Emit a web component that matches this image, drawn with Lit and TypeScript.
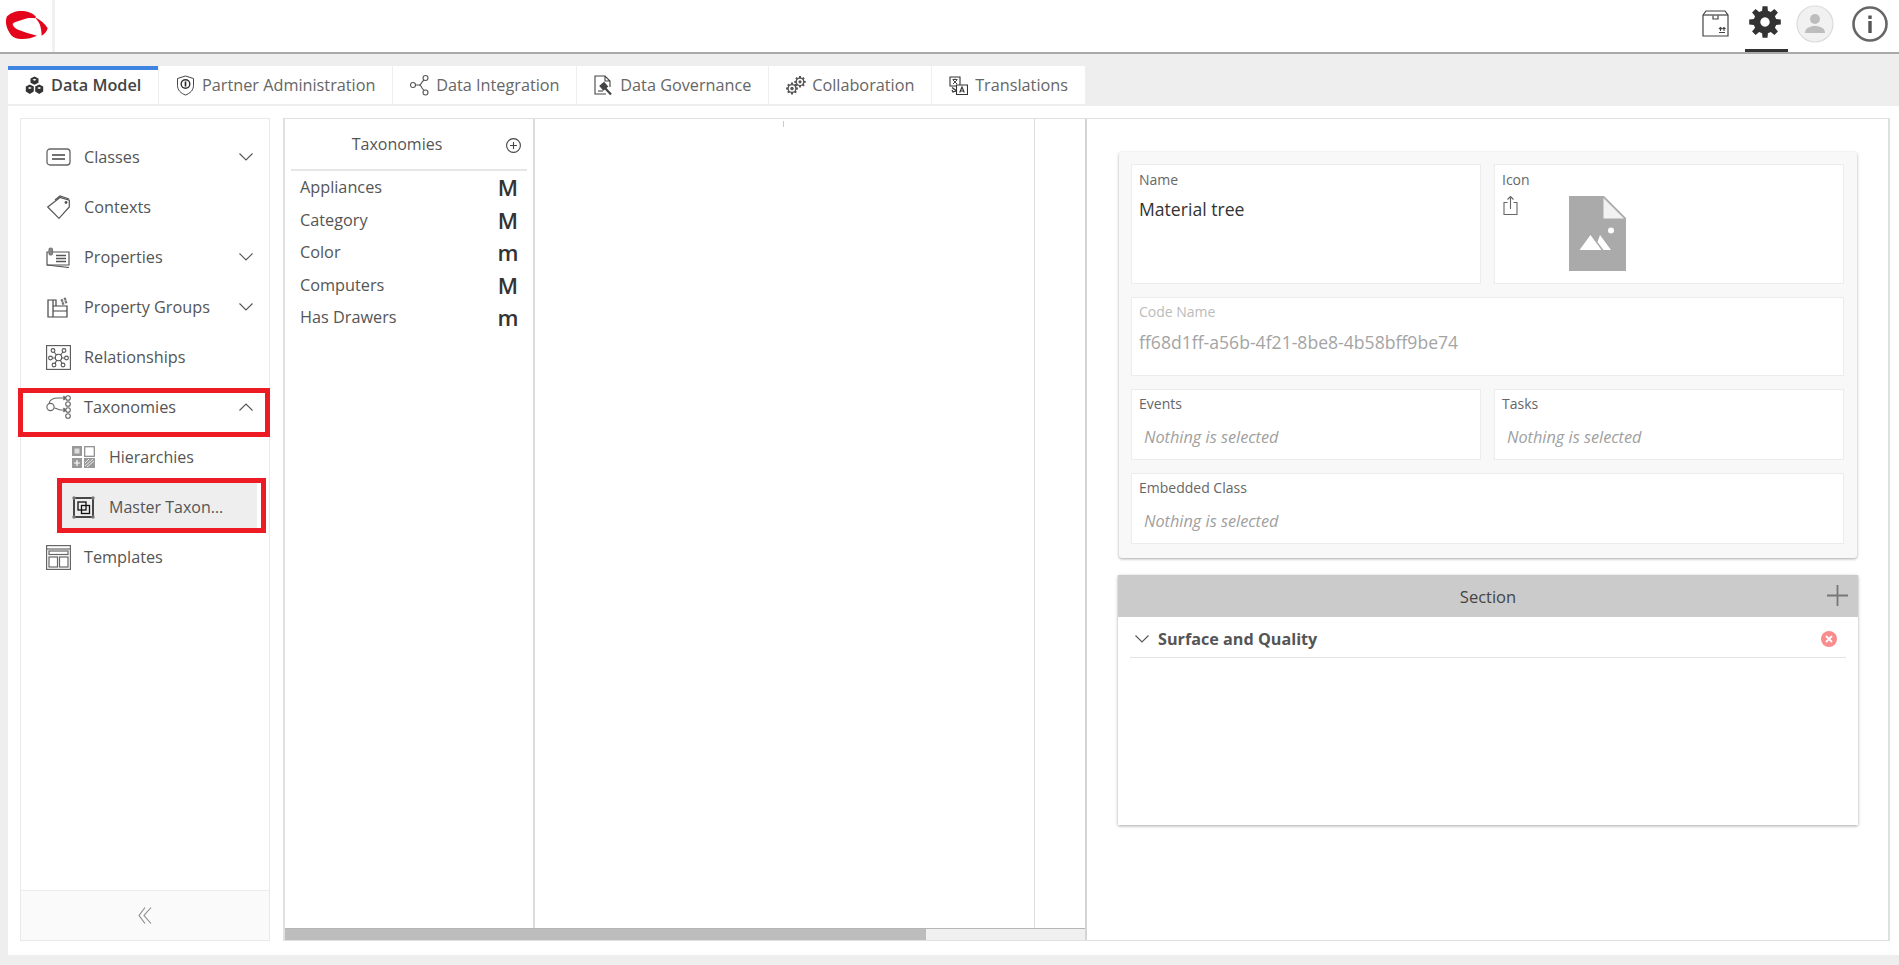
import { LitElement, html, css } from "lit";
import { customElement } from "lit/decorators.js";

function gearPath(cx: number, cy: number, outer: number, root: number, teeth: number) {
  const pts: string[] = [];
  const step = (Math.PI * 2) / teeth;
  for (let i = 0; i < teeth; i++) {
    const a = i * step - Math.PI / 2;
    const w = step * 0.2;
    const w2 = step * 0.3;
    const p = (r: number, t: number) => `${(cx + r * Math.cos(t)).toFixed(2)} ${(cy + r * Math.sin(t)).toFixed(2)}`;
    pts.push(p(root, a - w2 - 0.02), p(outer, a - w), p(outer, a + w), p(root, a + w2 + 0.02));
  }
  return "M" + pts.join("L") + "Z";
}

const ICONS: Record<string, unknown> = {
  model: html`<svg width="19" height="19" viewBox="0 0 19 19" fill="#333"><path d="M9.5 .5l4 2v4.2l-4 2-4-2V2.500z"/><path d="M4.800 8.500l4 2v5l-4 2.500-4-2.500v-5z"/><path d="M14.200 8.500l4 2v5l-4 2.500-4-2.500v-5z"/><path d="M9.500 2.800l2 1-2 1-2-1zM4.800 11l2 1-2 1-2-1zM14.200 11l2 1-2 1-2-1z" fill="#fff"/></svg>`,
  shield: html`<svg width="19" height="21" viewBox="0 0 19 21" fill="none" stroke="#444"><path d="M9.500 1l8 2.500v7c0 4.500-3.500 8-8 9.500-4.500-1.500-8-5-8-9.500v-7z"/><circle cx="9.500" cy="9" r="5" fill="#333" stroke="none"/><circle cx="9.500" cy="9" r="3.600" fill="#fff" stroke="none"/><path d="M9.500 6.500v5" stroke="#222" stroke-width="1.600"/></svg>`,
  nodes: html`<svg width="21" height="22" viewBox="0 0 21 22" fill="none" stroke="#555" stroke-width="1.100"><circle cx="3" cy="11" r="2.500"/><circle cx="15.500" cy="4" r="2.500"/><circle cx="15.500" cy="18.500" r="2.500"/><path d="M5.500 11h3.500c2 0 2-1 3-3l2-2M9 11c2 0 2 1 3 3l2 2.500"/></svg>`,
  gavel: html`<svg width="19" height="21" viewBox="0 0 19 21" fill="none" stroke="#444" stroke-width="1.100"><path d="M12 19H1V1h10l5 5v6M11 1v5h5"/><path d="M6 11l4-3.500 3.500 4-4 3.500z" fill="#444"/><path d="M11 13l6 6.500" stroke-width="2.200"/><path d="M4 16h5" /></svg>`,
  gears: html`<svg width="20" height="19" viewBox="0 0 20 19"><path d="${gearPath(6, 12.500, 6, 4.500, 8)}" fill="#555"/><circle cx="6" cy="12.500" r="3.200" fill="#fff"/><circle cx="6" cy="12.500" r="1.700" fill="#555"/><path d="${gearPath(14, 5.800, 5.800, 4.400, 8)}" fill="#555"/><circle cx="14" cy="5.800" r="3.100" fill="#fff"/><circle cx="14" cy="5.800" r="1.600" fill="#555"/></svg>`,
  translate: html`<svg width="19" height="19" viewBox="0 0 19 19" fill="none" stroke="#333" stroke-width="1.100"><path d="M1 1h10v9H8l-4 0H1z"/><path d="M3.500 3.500h5M6 2.500v1M4 4l4 4M8 4L4 8" stroke-width=".9"/><path d="M7.500 9h11v9.500h-11z" fill="#fff"/><path d="M10.700 16.500l2.300-5.500 2.300 5.500M11.500 15h3" /><path d="M3 11.500l4 3M3 14l1 2 3-1" stroke-width="1.300"/></svg>`,
  box: html`<svg width="27" height="27" viewBox="0 0 27 27" fill="none" stroke="#444" stroke-width="1.200"><path d="M1 5l3-4h19l3 4v21H1z"/><path d="M1 5h25"/><path d="M11 5.500v3.500h5V5.500" /><path d="M17 22.500h6M18.500 21v-3.500m-1.500 1.500 1.500-1.500 1.500 1.500M22 21v-3.500m-1.500 1.500 1.500-1.500 1.500 1.500" stroke-width="1.100"/></svg>`,
  classes: html`<svg width="25" height="18" viewBox="0 0 25 18" fill="none" stroke="#666" stroke-width="1.300"><rect x="1" y="1" width="23" height="16" rx="3"/><path d="M6 7h13M6 11h13" stroke="#444"/></svg>`,
  contexts: html`<svg width="25" height="24" viewBox="0 0 25 24" fill="none" stroke="#555" stroke-width="1.200"><path d="M1.700 12L14 2.500l9.300 2.800V12L13 23.300z"/><path d="M9 5L14 1l9 3"/><circle cx="20" cy="7.500" r="1.400" fill="#555" stroke="none"/></svg>`,
  props: html`<svg width="24" height="21" viewBox="0 0 24 21" fill="none" stroke="#555" stroke-width="1.200"><path d="M1 5h22v13H1z"/><path d="M1 18l22 2.500"/><path d="M10 8.500h10M10 11.500h10M10 14.500h10" stroke-width="1.400"/><rect x="3" y="1" width="3.500" height="7" rx="1.700" fill="#888" stroke="#777"/></svg>`,
  groups: html`<svg width="24" height="22" viewBox="0 0 24 22" fill="none" stroke="#444" stroke-width="1.200"><path d="M2 4h8v6h11v11H2zM7 4v17M7 10h14M7 15h14"/><path d="M16 8l2-1M19 6.500l2-1M15 5l2-1M18 3.500l2-1" stroke="#777" stroke-width="2.600"/></svg>`,
  rel: html`<svg width="25" height="25" viewBox="0 0 25 25" fill="none" stroke="#555" stroke-width="1.100"><rect x=".6" y=".6" width="23.800" height="23.800"/><circle cx="12.500" cy="12.500" r="3.200"/><circle cx="7" cy="5.500" r="1.900"/><circle cx="18" cy="5.500" r="1.900"/><circle cx="4.500" cy="13" r="1.900"/><circle cx="20.500" cy="13" r="1.900"/><circle cx="8" cy="20" r="1.900"/><circle cx="17" cy="20" r="1.900"/><path d="M8 7l2.500 3M17 7l-2.500 3M6.500 13h3M18.500 13h-3M9 18.500l1.700-3.300M16 18.500l-1.700-3.300"/></svg>`,
  tax: html`<svg width="25" height="26" viewBox="0 0 25 26" fill="none" stroke="#666" stroke-width="1.100"><circle cx="4.500" cy="13" r="3.600"/><circle cx="22" cy="4" r="2.300"/><circle cx="22" cy="10" r="2.300"/><circle cx="22" cy="16" r="2.300"/><circle cx="22" cy="22" r="2.300"/><path d="M3 9.500C4 5 8 4 12 4h7.500M8 14c3 0 4 2 7 2h4.500"/><path d="M17.500 2l2 2-2 2M17.500 14l2 2-2 2" fill="#666"/></svg>`,
  hier: html`<svg width="23" height="22" viewBox="0 0 23 22"><rect x="0" y="0" width="10" height="10" fill="#999"/><rect x="2.500" y="2.500" width="5" height="5" fill="#ddd"/><rect x="12.700" y=".7" width="9.600" height="9.600" fill="none" stroke="#888" stroke-width="1.200"/><rect x="0" y="12" width="10" height="10" fill="#999"/><path d="M5 14v6M2 17h6" stroke="#fff" stroke-width="1.200"/><rect x="12" y="12" width="11" height="10" fill="#999"/><path d="M13 20l8-7M15 21l7-6M13 17l4-4" stroke="#fff" stroke-width=".8"/></svg>`,
  master: html`<svg width="23" height="23" viewBox="0 0 23 23" fill="none" stroke="#111" stroke-width="1.500"><rect x="2" y="2" width="19" height="19"/><rect x="6" y="6" width="8" height="8" stroke-width="1.300"/><rect x="9.500" y="9.500" width="8" height="8" stroke-width="1.300"/><circle cx="2" cy="2" r="1.700" fill="#777" stroke="none"/><circle cx="21" cy="2" r="1.700" fill="#777" stroke="none"/><circle cx="2" cy="21" r="1.700" fill="#777" stroke="none"/><circle cx="21" cy="21" r="1.700" fill="#777" stroke="none"/></svg>`,
  tpl: html`<svg width="25" height="25" viewBox="0 0 25 25" fill="none" stroke="#666" stroke-width="1.200"><rect x=".6" y=".6" width="23.800" height="23.800"/><path d="M.6 4h23.800" /><rect x="3" y="6" width="19" height="3.500"/><rect x="3" y="12" width="8.500" height="10"/><rect x="13.500" y="12" width="8.500" height="10"/></svg>`,
};

const TABS = [
  ["Data Model", "model"],
  ["Partner Administration", "shield"],
  ["Data Integration", "nodes"],
  ["Data Governance", "gavel"],
  ["Collaboration", "gears"],
  ["Translations", "translate"],
];

const TAXA = [
  ["Appliances", "M"],
  ["Category", "M"],
  ["Color", "m"],
  ["Computers", "M"],
  ["Has Drawers", "m"],
];

const chevDown = html`<svg class="chev" width="14" height="8" viewBox="0 0 14 8" fill="none" stroke="#555" stroke-width="1.100"><path d="M.5 .5L7 7l6.500-6.500"/></svg>`;
const chevUp = html`<svg class="chev" width="14" height="8" viewBox="0 0 14 8" fill="none" stroke="#555" stroke-width="1.100"><path d="M.5 7.500L7 1l6.500 6.500"/></svg>`;

@customElement("app-root")
export class AppRoot extends LitElement {
  static styles = css`
    :host {
      display: flex;
      flex-direction: column;
      height: 100vh;
      background: #eeeeee;
      font-family: "Open Sans", sans-serif;
      color: #555;
      font-size: 16.250px;
      overflow: hidden;
    }
    * { box-sizing: border-box; }
    svg { display: block; flex: none; }

    .top {
      height: 54px;
      flex: none;
      background: #fff;
      border-bottom: 2px solid #a9a9a9;
      display: flex;
      align-items: stretch;
    }
    .logo { width: 52px; display: flex; align-items: center; justify-content: flex-start; }
    .logo-sep { width: 3px; background: #f1f1f1; }
    .top-right { margin-left: auto; display: flex; align-items: flex-start; padding-right: 11px; }
    .tool { display: flex; align-items: flex-start; justify-content: center; }
    .tool.box { width: 27px; margin-right: 16px; padding-top: 10px; }
    .tool.gear { width: 43px; height: 52px; border-bottom: 3px solid #333; padding: 6px 4px 0 0; margin-right: 8px; }
    .tool.user { width: 38px; margin-right: 18px; padding-top: 5px; }
    .tool.info { width: 36px; padding-top: 6px; }

    .tabs { display: flex; padding: 12px 0 2px 8px; flex: none; gap: 1px; }
    .tab {
      height: 38px;
      background: #fff;
      display: flex;
      align-items: center;
      padding: 0 16.700px 0 16.5px;
      color: #666;
      font-size: 16.250px;
      white-space: nowrap;
    }
    .tab.on { border-top: 4px solid #3d85e0; color: #444; font-weight: 600; padding-bottom: 4px; }
    .tab-icon { width: 26.500px; display: flex; align-items: center; }

    .main {
      flex: 1;
      min-height: 0;
      margin: 0 0 10px 8px;
      background: #fff;
      padding: 12px 9px 14px 12px;
      display: flex;
      gap: 13px;
    }

    .side {
      width: 250px;
      flex: none;
      border: 1px solid #e9e9e9;
      display: flex;
      flex-direction: column;
      padding-top: 13px;
      color: #555;
    }
    .row {
      position: relative;
      height: 50px;
      flex: none;
      display: flex;
      align-items: center;
      padding: 0 16px 0 25px;
    }
    .slot { width: 38px; display: flex; align-items: center; }
    .chev { margin-left: auto; }
    .row.mark::after {
      content: "";
      position: absolute;
      top: 6px; bottom: -5px; left: -3px; right: -1px;
      border: 5px solid #ed1c24;
      pointer-events: none;
    }
    .row.sub { margin-left: 41px; width: 195px; padding: 0 0 0 10px; font-size: 16px; }
    .row.sub .slot { width: 37px; }
    .row.sub.on {
      height: 45px;
      margin-top: 1px;
      margin-bottom: 4px;
      padding-top: 3px;
      background: #eeeeee;
    }
    .row.sub.on::after {
      content: "";
      position: absolute;
      top: -5px; bottom: -5px; left: -5px; right: -9px;
      border: 5px solid #ed1c24;
      pointer-events: none;
    }
    .collapse {
      margin-top: auto;
      height: 50px;
      flex: none;
      border-top: 1px solid #ececec;
      background: #fafafa;
      display: flex;
      align-items: center;
      justify-content: center;
    }

    .work {
      flex: 1;
      display: flex;
      border: 1px solid #e0e0e0;
      border-width: 1px 2px 1px 2px;
      min-width: 0;
    }
    .left {
      width: 802px;
      flex: none;
      display: flex;
      flex-direction: column;
      border-right: 2px solid #d4d4d4;
    }
    .cols { flex: 1; display: flex; min-height: 0; }
    .col-tax { width: 250px; flex: none; border-right: 2px solid #dcdcdc; padding: 0 6px 0 6px; }
    .col-empty { width: 500px; flex: none; border-right: 1px solid #dcdcdc; }
    .tick { width: 1px; height: 6px; background: #ccc; margin: 2px 0 0 248px; }
    .tax-head {
      height: 52px;
      border-bottom: 2px solid #e6e6e6;
      display: flex;
      align-items: center;
      padding-bottom: 2px;
    }
    .tax-title { flex: 1; text-align: center; padding-right: 3px; padding-top: 1px; color: #555; font-size: 16px; }
    .tax-add { margin-right: 6px; margin-top: 4px; }
    .tax-list { padding: 0 10px 0 9px; }
    .tax-row { height: 32.500px; display: flex; align-items: center; justify-content: space-between; color: #555; }
    .tax-badge { font-weight: 600; font-size: 22px; color: #333; line-height: 1; width: 18px; display: flex; justify-content: center; }
    .scroll { height: 12px; flex: none; background: #f0f0f0; border-top: 1px solid #b5b5b5; }
    .thumb { width: 641px; height: 100%; background: #bdbdbd; }

    .right { flex: 1; padding: 33px 30px 0 31px; min-width: 0; }
    .card {
      background: #f8f8f8;
      border-radius: 3px;
      box-shadow: 0 1px 3px rgba(0,0,0,.35);
      padding: 12px 13px 14px 12px;
      margin: 0 1px;
      display: grid;
      grid-template-columns: 1fr 1fr;
      column-gap: 13px;
      row-gap: 13px;
    }
    .fbox { background: #fff; border: 1px solid #ececec; padding: 5px 6px 0 7px; }
    .fbox.wide { grid-column: 1 / 3; }
    .h1 { height: 120px; padding-top: 6px; }
    .h2 { height: 79px; }
    .h3 { height: 71px; }
    .lab { font-size: 14px; line-height: 18px; color: #666; }
    .lab.dim { color: #bbb; }
    .val { font-size: 17.600px; line-height: 24px; color: #333; margin-top: 8px; }
    .val.dim { color: #a4a4a4; margin-top: 8.500px; }
    .none { font-size: 16.300px; line-height: 20px; font-style: italic; color: #a0a0a0; margin: 14px 0 0 5px; }
    .icon-row { display: flex; margin-top: 7px; }
    .share { margin-left: 1px; }
    .file { margin-left: 51px; }

    .section {
      margin-top: 17px;
      height: 250px;
      background: #fff;
      box-shadow: 0 1px 3px rgba(0,0,0,.35);
    }
    .sec-head {
      height: 42px;
      background: #cbcbcb;
      display: flex;
      align-items: center;
      justify-content: center;
      position: relative;
      color: #444;
      font-size: 16.500px;
    }
    .sec-add { position: absolute; right: 10px; top: 10px; }
    .sec-row {
      margin: 0 12px;
      height: 41px;
      border-bottom: 1px solid #e2e2e2;
      display: flex;
      align-items: center;
      font-weight: 700;
      font-size: 16.200px;
      color: #555;
      padding: 3px 0 0 5px;
    }
    .sec-row .name { margin-left: 9px; }
    .del {
      margin-left: auto;
      margin-right: 9px;
      width: 16px; height: 16px;
      border-radius: 50%;
      background: #f98d8d;
      display: flex;
      align-items: center;
      justify-content: center;
    }
  `;

  render() {
    return html`
      <div class="top">
        <div class="logo">
          <svg width="52" height="52" viewBox="0 0 52 52"><path fill="#e3051b" d="M6.700 16.700C10 13 16 11 21 11c6 0 12 2 15 5.700l-1 1.600c-4-.8-9-.4-13.300 1.700-4 1.300-9.300 2.800-9 4.300.5 2 2 3.500 4 4.700 5 2.500 14 5 20.300 6.700-4.500 2.200-10.500 3.600-16 3.300-4-.2-7.500-1.300-9.300-3.300C8 31 5.500 26 6 20z"/><path fill="#e3051b" d="M35 17.300c5.500 2.500 10 6.500 12.700 11-1 3-3 6-6 7.400-.2-4-.7-7.500-1.700-10.700-1-2.700-3-5-5-7.700z"/></svg>
        </div>
        <div class="logo-sep"></div>
        <div class="top-right">
          <div class="tool box">${ICONS.box}</div>
          <div class="tool gear">
            <svg width="32" height="32" viewBox="0 0 32 32"><path fill="#333" fill-rule="evenodd" d="${gearPath(16, 16, 16, 11.500, 8)} M16 11.300a4.700 4.700 0 1 0 .01 0z"/></svg>
          </div>
          <div class="tool user">
            <svg width="38" height="38" viewBox="0 0 38 38"><circle cx="19" cy="19" r="18" fill="#f1f1f1" stroke="#dcdcdc" stroke-width="1.200"/><circle cx="19" cy="14" r="5" fill="#bdbdbd"/><path d="M9 28c0-5 5-7 10-7s10 2 10 7z" fill="#bdbdbd"/></svg>
          </div>
          <div class="tool info">
            <svg width="36" height="36" viewBox="0 0 36 36" fill="none"><circle cx="18" cy="18" r="16.500" stroke="#666" stroke-width="2.600"/><rect x="16.300" y="15" width="3.400" height="12" fill="#555"/><rect x="16.300" y="9.500" width="3.400" height="3.400" fill="#555"/></svg>
          </div>
        </div>
      </div>

      <div class="tabs">
        ${TABS.map(
          ([label, icon], i) => html`<div class="tab ${i === 0 ? "on" : ""}"><span class="tab-icon">${ICONS[icon]}</span>${label}</div>`
        )}
      </div>

      <div class="main">
        <nav class="side">
          <div class="row"><span class="slot">${ICONS.classes}</span>Classes${chevDown}</div>
          <div class="row"><span class="slot">${ICONS.contexts}</span>Contexts</div>
          <div class="row"><span class="slot">${ICONS.props}</span>Properties${chevDown}</div>
          <div class="row"><span class="slot">${ICONS.groups}</span>Property Groups${chevDown}</div>
          <div class="row"><span class="slot">${ICONS.rel}</span>Relationships</div>
          <div class="row mark"><span class="slot">${ICONS.tax}</span>Taxonomies${chevUp}</div>
          <div class="row sub"><span class="slot">${ICONS.hier}</span>Hierarchies</div>
          <div class="row sub on"><span class="slot">${ICONS.master}</span>Master Taxon…</div>
          <div class="row"><span class="slot">${ICONS.tpl}</span>Templates</div>
          <div class="collapse">
            <svg width="14" height="17" viewBox="0 0 14 17" fill="none" stroke="#888" stroke-width="1.100"><path d="M7 .5L1 8.500l6 8M13 .5L6 8.500l7 8"/></svg>
          </div>
        </nav>

        <section class="work">
          <div class="left">
            <div class="cols">
              <div class="col-tax">
                <div class="tax-head">
                  <div class="tax-title">Taxonomies</div>
                  <svg class="tax-add" width="15" height="15" viewBox="0 0 15 15" fill="none" stroke="#444" stroke-width="1.100"><circle cx="7.500" cy="7.500" r="6.900"/><path d="M7.500 4v7M4 7.500h7"/></svg>
                </div>
                <div class="tax-list">
                  ${TAXA.map(([n, b]) => html`<div class="tax-row"><span>${n}</span><span class="tax-badge">${b}</span></div>`)}
                </div>
              </div>
              <div class="col-empty"><div class="tick"></div></div>
            </div>
            <div class="scroll"><div class="thumb"></div></div>
          </div>

          <div class="right">
            <div class="card">
              <div class="fbox h1">
                <div class="lab">Name</div>
                <div class="val">Material tree</div>
              </div>
              <div class="fbox h1">
                <div class="lab">Icon</div>
                <div class="icon-row">
                  <svg class="share" width="15" height="19" viewBox="0 0 15 19" fill="none" stroke="#666" stroke-width="1.100"><path d="M4.500 6.500H1v12h13v-12h-3.500"/><path d="M7.500 13V1M4.500 3.500l3-3 3 3"/></svg>
                  <svg class="file" width="57" height="75" viewBox="0 0 57 75"><path fill="#aaaaaa" d="M0 0h35l22 22v53H0z"/><path fill="#f2f2f2" d="M34.500 2l20.500 20.500H34.500z"/><circle cx="42" cy="34.500" r="3" fill="#fff"/><path fill="#fff" d="M10.500 54l11-15 11 15zM31 39l11 15h-7.500l-6-8z"/></svg>
                </div>
              </div>
              <div class="fbox wide h2">
                <div class="lab dim">Code Name</div>
                <div class="val dim">ff68d1ff-a56b-4f21-8be8-4b58bff9be74</div>
              </div>
              <div class="fbox h3">
                <div class="lab">Events</div>
                <div class="none">Nothing is selected</div>
              </div>
              <div class="fbox h3">
                <div class="lab">Tasks</div>
                <div class="none">Nothing is selected</div>
              </div>
              <div class="fbox wide h3">
                <div class="lab">Embedded Class</div>
                <div class="none">Nothing is selected</div>
              </div>
            </div>

            <div class="section">
              <div class="sec-head">
                Section
                <svg class="sec-add" width="21" height="21" viewBox="0 0 21 21" stroke="#777" stroke-width="1.800"><path d="M10.500 0v21M0 10.500h21"/></svg>
              </div>
              <div class="sec-row">
                <svg width="14" height="8" viewBox="0 0 14 8" fill="none" stroke="#555" stroke-width="1.100"><path d="M.5 .5L7 7l6.500-6.500"/></svg>
                <span class="name">Surface and Quality</span>
                <span class="del"><svg width="8" height="8" viewBox="0 0 8 8" stroke="#fff" stroke-width="1.800"><path d="M1 1l6 6M7 1L1 7"/></svg></span>
              </div>
            </div>
          </div>
        </section>
      </div>
    `;
  }
}
